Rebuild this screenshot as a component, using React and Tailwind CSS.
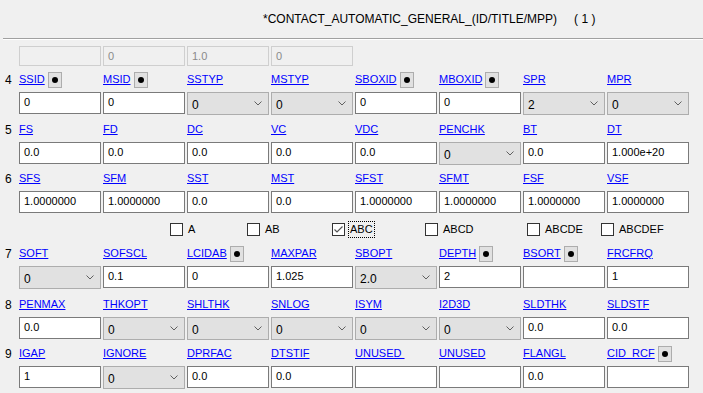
import React from "react";

// field kinds: t = text input, s = select, b = label has pick button
const rows = [
  {
    n: "4",
    mt: "mt-[4px]",
    fields: [
      { l: "SSID", b: true, v: "0" },
      { l: "MSID", b: true, v: "0" },
      { l: "SSTYP", s: true, v: "0" },
      { l: "MSTYP", s: true, v: "0" },
      { l: "SBOXID", b: true, v: "0" },
      { l: "MBOXID", b: true, v: "0" },
      { l: "SPR", s: true, v: "2" },
      { l: "MPR", s: true, v: "0" },
    ],
  },
  {
    n: "5",
    mt: "mt-[5px]",
    fields: [
      { l: "FS", v: "0.0" },
      { l: "FD", v: "0.0" },
      { l: "DC", v: "0.0" },
      { l: "VC", v: "0.0" },
      { l: "VDC", v: "0.0" },
      { l: "PENCHK", s: true, v: "0" },
      { l: "BT", v: "0.0" },
      { l: "DT", v: "1.000e+20" },
    ],
  },
  {
    n: "6",
    mt: "mt-[4px]",
    fields: [
      { l: "SFS", v: "1.0000000" },
      { l: "SFM", v: "1.0000000" },
      { l: "SST", v: "0.0" },
      { l: "MST", v: "0.0" },
      { l: "SFST", v: "1.0000000" },
      { l: "SFMT", v: "1.0000000" },
      { l: "FSF", v: "1.0000000" },
      { l: "VSF", v: "1.0000000" },
    ],
  },
];

const rowsBottom = [
  {
    n: "7",
    mt: "mt-[8px]",
    fields: [
      { l: "SOFT", s: true, v: "0" },
      { l: "SOFSCL", v: "0.1" },
      { l: "LCIDAB", b: true, v: "0" },
      { l: "MAXPAR", v: "1.025" },
      { l: "SBOPT", s: true, v: "2.0" },
      { l: "DEPTH", b: true, v: "2" },
      { l: "BSORT", b: true, v: "" },
      { l: "FRCFRQ", v: "1" },
    ],
  },
  {
    n: "8",
    mt: "mt-[6px]",
    fields: [
      { l: "PENMAX", v: "0.0" },
      { l: "THKOPT", s: true, v: "0" },
      { l: "SHLTHK", s: true, v: "0" },
      { l: "SNLOG", s: true, v: "0" },
      { l: "ISYM", s: true, v: "0" },
      { l: "I2D3D", s: true, v: "0" },
      { l: "SLDTHK", v: "0.0" },
      { l: "SLDSTF", v: "0.0" },
    ],
  },
  {
    n: "9",
    mt: "mt-[4px]",
    fields: [
      { l: "IGAP", v: "1" },
      { l: "IGNORE", s: true, v: "0" },
      { l: "DPRFAC", v: "0.0" },
      { l: "DTSTIF", v: "0.0" },
      { l: "UNUSED ", v: "" },
      { l: "UNUSED", v: "" },
      { l: "FLANGL", v: "0.0" },
      { l: "CID_RCF", b: true, v: "" },
    ],
  },
];

const checks = [
  { l: "A", w: "w-[77px]" },
  { l: "AB", w: "w-[85px]" },
  { l: "ABC", w: "w-[93px]", on: true },
  { l: "ABCD", w: "w-[102px]" },
  { l: "ABCDE", w: "w-[74px]" },
  { l: "ABCDEF", w: "w-[90px]" },
];

const PickButton = () => (
  <span className="ml-[3px] w-[14px] h-[16px] border border-[#adadad] bg-[#e1e1e1] flex items-center justify-center">
    <span className="w-[6px] h-[6px] rounded-full bg-black" />
  </span>
);

const Field = ({ f }) => (
  <div className="w-[82px] flex flex-col">
    <div className="h-[19px] flex items-center">
      <span className="text-[11px] text-[#0000ff] underline whitespace-pre leading-none">
        {f.l}
      </span>
      {f.b && <PickButton />}
    </div>
    {f.s ? (
      <div className="mt-[3px] h-[23px] border border-[#adadad] bg-[#e1e1e1] flex items-center justify-between pl-[4px] pr-[6px]">
        <span className="text-[12px] text-black pt-[2px]">{f.v}</span>
        <svg width="8" height="5" viewBox="0 0 8 5">
          <path d="M0.5 0.5 L4 4 L7.5 0.5" fill="none" stroke="#606060" strokeWidth="1" />
        </svg>
      </div>
    ) : (
      <div className="mt-[3px] h-[22px] border border-[#7a7a7a] bg-white pl-[4px] pt-[3px] text-[11px] text-black leading-[13px]">
        {f.v}
      </div>
    )}
  </div>
);

const Row = ({ r }) => (
  <div className={`flex ${r.mt}`}>
    <div className="w-[19px] pl-[5px] h-[19px] flex items-center text-[12px] text-black">
      {r.n}
    </div>
    <div className="flex gap-[2px]">
      {r.fields.map((f, i) => (
        <Field key={i} f={f} />
      ))}
    </div>
  </div>
);

export default function App() {
  return (
    <div
      className="w-[703px] h-[393px] bg-[#f0f0f0] overflow-hidden"
      style={{ fontFamily: '"Liberation Sans", Arial, sans-serif' }}
    >
      {/* title */}
      <div className="h-[38px] flex items-center pl-[263px] text-[12px] text-black">
        <span>*CONTACT_AUTOMATIC_GENERAL_(ID/TITLE/MPP)</span>
        <span className="ml-[17px]">( 1 )</span>
      </div>
      <div className="ml-[3px] h-px bg-[#a0a0a0]" />
      <div className="ml-[3px] h-px bg-white" />

      {/* disabled header row */}
      <div className="mt-[6px] pl-[19px] flex gap-[2px]">
        {["", "0", "1.0", "0"].map((v, i) => (
          <div
            key={i}
            className="w-[82px] h-[20px] border border-[#cfcfcf] pl-[4px] flex items-center text-[11px] text-[#8a8a8a]"
          >
            {v}
          </div>
        ))}
      </div>

      {rows.map((r) => (
        <Row key={r.n} r={r} />
      ))}

      {/* checkbox options */}
      <div className="mt-[10px] h-[13px] pl-[170px] flex items-center">
        {checks.map((c) => (
          <div key={c.l} className={`${c.w} flex items-center`}>
            <span className="w-[13px] h-[13px] border border-[#333333] bg-white flex items-center justify-center">
              {c.on && (
                <svg width="11" height="11" viewBox="0 0 11 11">
                  <path d="M1.5 5.5 L4 8 L9.5 2.5" fill="none" stroke="#555555" strokeWidth="1.2" />
                </svg>
              )}
            </span>
            <span
              className={`ml-[3px] text-[11px] text-black leading-[15px] px-[1px] ${
                c.on ? "border border-dotted border-black" : "border border-transparent"
              }`}
            >
              {c.l}
            </span>
          </div>
        ))}
      </div>

      {rowsBottom.map((r) => (
        <Row key={r.n} r={r} />
      ))}
    </div>
  );
}
